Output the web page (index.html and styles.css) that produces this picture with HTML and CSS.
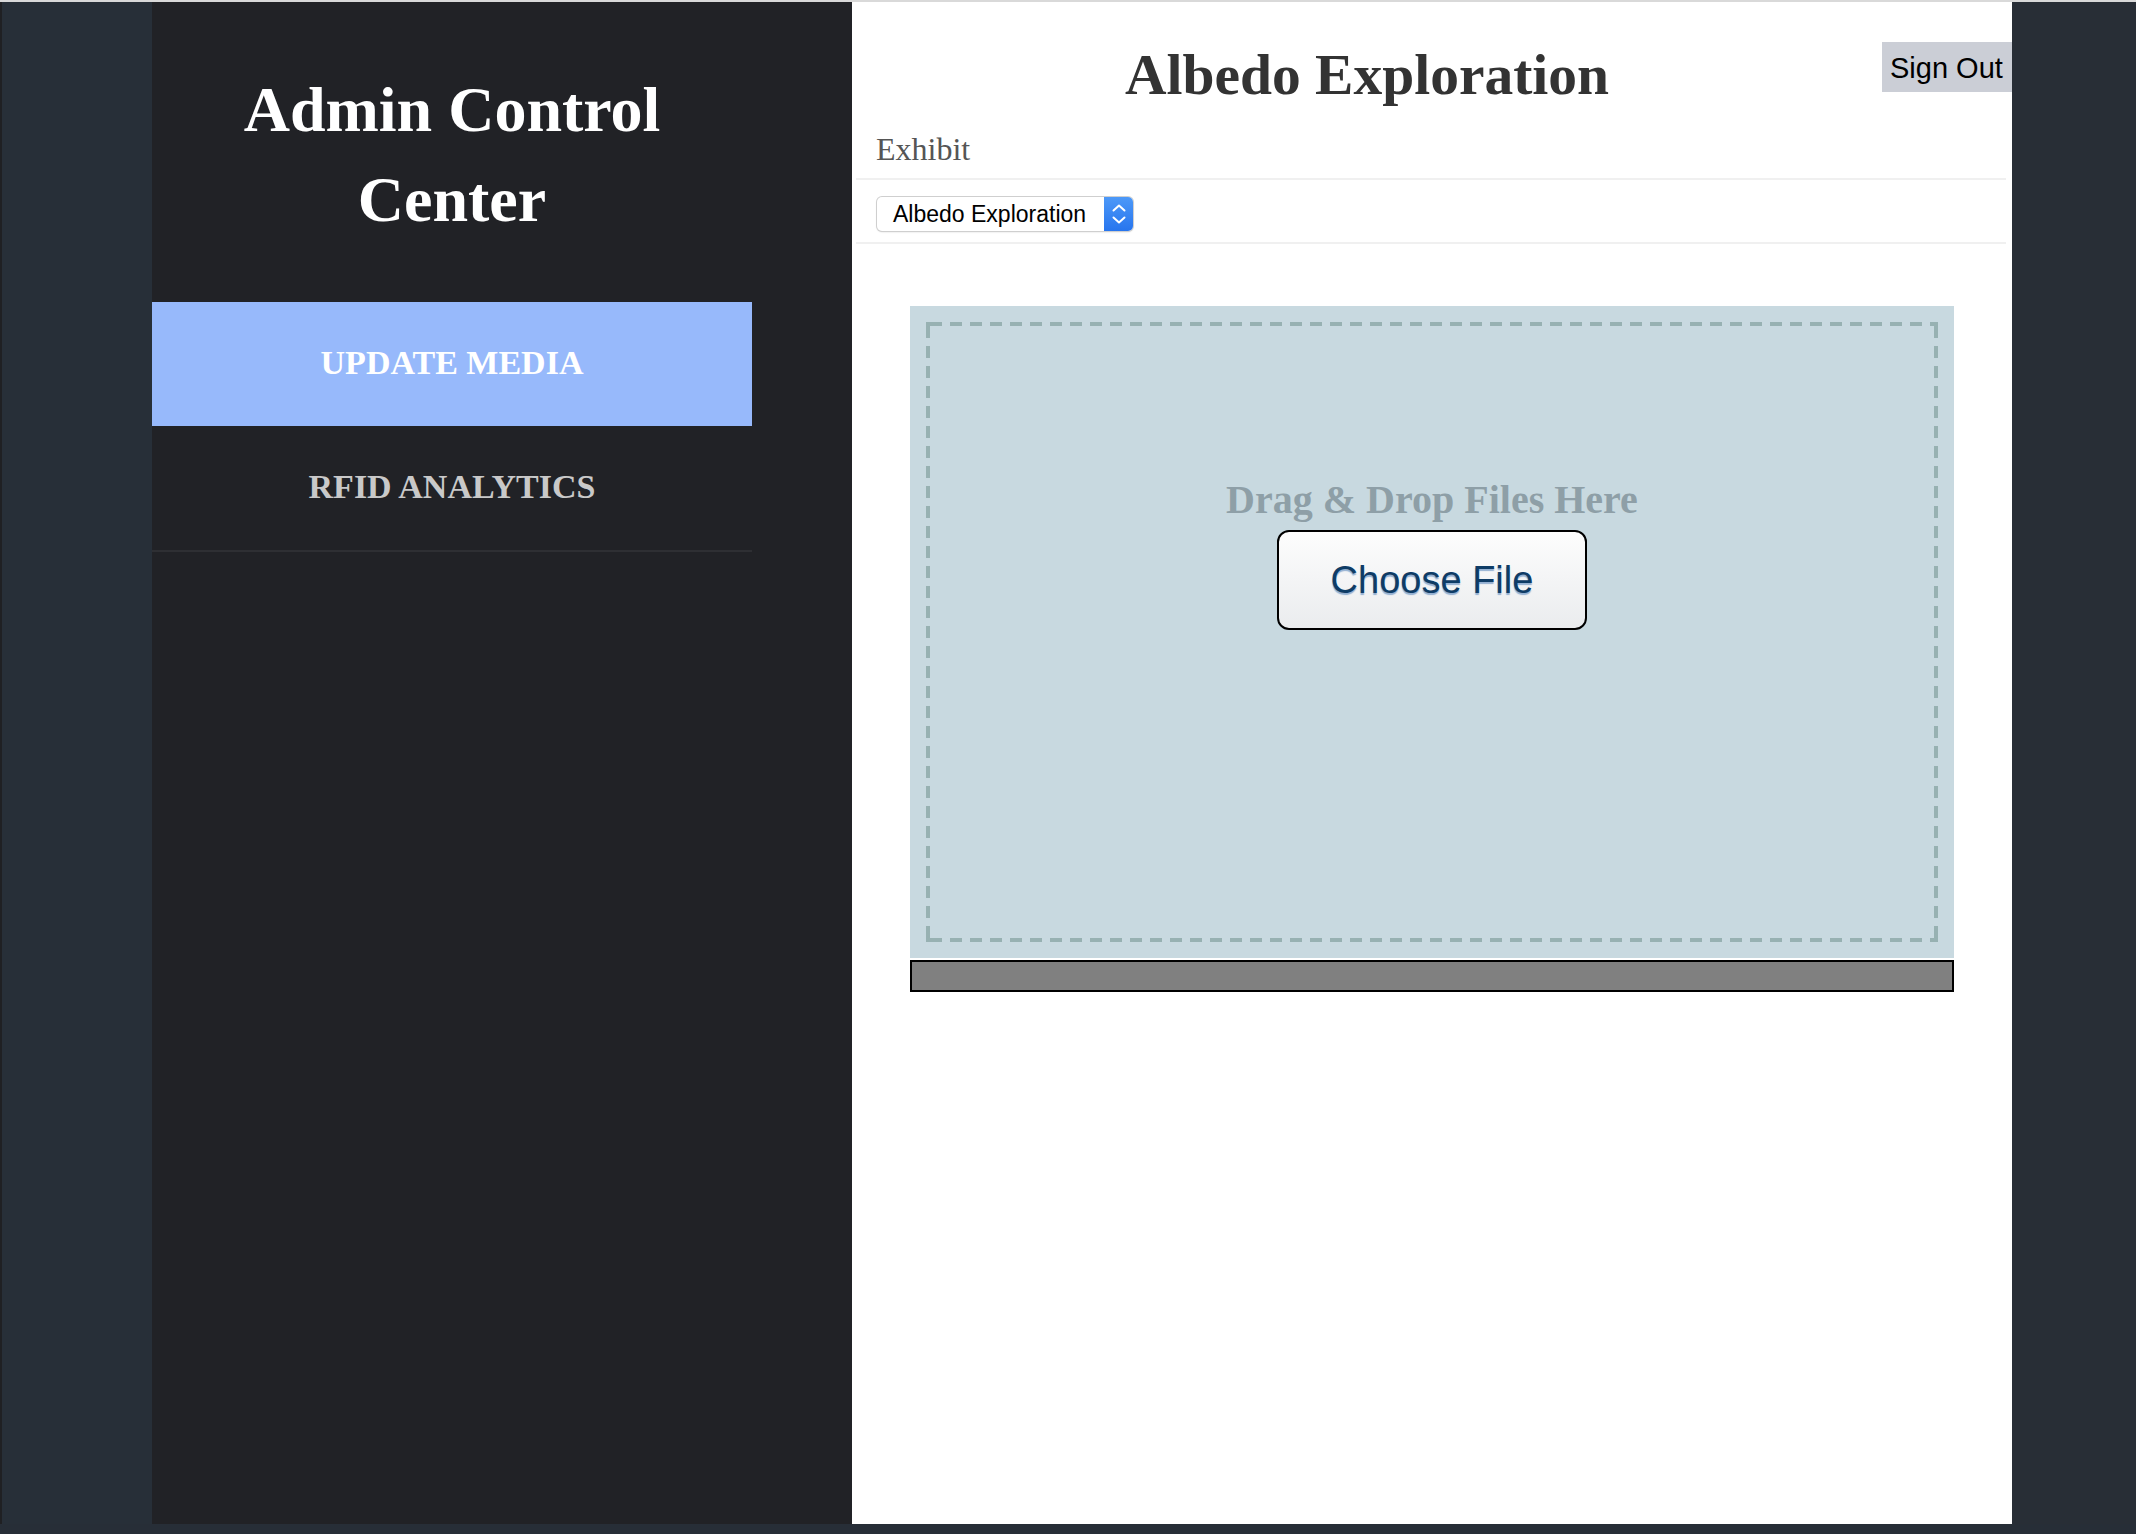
FILE: index.html
```html
<!DOCTYPE html>
<html lang="en">
<head>
<meta charset="utf-8">
<title>Admin Control Center</title>
<link rel="stylesheet" href="styles.css">
</head>
<body>
<div class="app">
  <div class="edge"></div>
  <div class="gutter"></div>
  <aside class="sidebar">
    <h1 class="brand">Admin Control<br>Center</h1>
    <nav class="nav">
      <a class="nav-item active">Update Media</a>
      <a class="nav-item">RFID Analytics</a>
    </nav>
  </aside>
  <main class="main">
    <header class="top">
      <h1 class="page-title">Albedo Exploration</h1>
      <button class="signout">Sign Out</button>
    </header>
    <div class="label">Exhibit</div>
    <div class="select-row">
      <div class="select">
        <span class="select-text">Albedo Exploration</span>
        <span class="stepper">
          <svg width="29" height="34" viewBox="0 0 29 34">
            <path d="M9.5 13.5 L15 8.5 L20.5 13.5" fill="none" stroke="#fff" stroke-width="2" stroke-linecap="round" stroke-linejoin="round"/>
            <path d="M9.5 20.5 L15 25.5 L20.5 20.5" fill="none" stroke="#fff" stroke-width="2" stroke-linecap="round" stroke-linejoin="round"/>
          </svg>
        </span>
      </div>
    </div>
    <section class="dropzone">
      <div class="dropzone-inner">
        <div class="drop-text">Drag &amp; Drop Files Here</div>
        <button class="choose">Choose File</button>
      </div>
    </section>
    <div class="progress"></div>
  </main>
  <div class="rightcol"></div>
</div>
</body>
</html>
```
FILE: styles.css
```css
html, body {
  margin: 0;
  padding: 0;
}
body {
  background: #272e37;
  width: 2136px;
  height: 1534px;
  overflow: hidden;
  border-top: 2px solid #d9d9d9;
  box-sizing: border-box;
}
.app {
  display: flex;
  height: 1522px;
}
.edge {
  width: 2px;
  background: #1f2023;
}
.gutter {
  width: 150px;
  background: #272f38;
}
.sidebar {
  width: 700px;
  background: #212226;
  box-sizing: border-box;
  padding-top: 63px;
}
.brand {
  width: 600px;
  margin: 0;
  text-align: center;
  font-family: "Liberation Serif", "Times New Roman", serif;
  font-weight: bold;
  font-size: 64px;
  line-height: 90px;
  color: #ffffff;
}
.nav {
  width: 600px;
  margin-top: 57px;
  border-bottom: 2px solid #2e2f33;
  display: flex;
  flex-direction: column;
}
.nav-item {
  height: 124px;
  display: flex;
  align-items: center;
  justify-content: center;
  font-family: "Liberation Serif", "Times New Roman", serif;
  font-weight: bold;
  font-size: 34px;
  text-transform: uppercase;
  color: #c9c9c9;
  padding-bottom: 2px;
  box-sizing: border-box;
}
.nav-item.active {
  background: #97b9fb;
  color: #ffffff;
}
.main {
  width: 1160px;
  background: #ffffff;
  display: flex;
  flex-direction: column;
}
.rightcol {
  flex: 1;
  background: #282e36;
}
.top {
  display: flex;
  align-items: flex-start;
  padding-top: 40px;
}
.page-title {
  flex: 1;
  margin: 0;
  text-align: center;
  font-family: "Liberation Serif", "Times New Roman", serif;
  font-weight: bold;
  font-size: 57.5px;
  line-height: 66px;
  color: #333333;
}
.signout {
  box-sizing: border-box;
  width: 130px;
  height: 50px;
  margin: 0;
  border: none;
  background: #cbced6;
  color: #000;
  font-family: "Liberation Sans", Arial, sans-serif;
  font-size: 29px;
  text-align: left;
  padding: 3px 0 0 8px;
  white-space: nowrap;
  overflow: hidden;
  line-height: 47px;
}
.label {
  margin-top: 20px;
  padding-left: 24px;
  font-family: "Liberation Serif", "Times New Roman", serif;
  font-size: 32px;
  line-height: 42px;
  color: #555555;
}
.select-row {
  margin: 8px 6px 0 4px;
  border-top: 2px solid #f0f0f0;
  border-bottom: 2px solid #f0f0f0;
  padding: 17px 0 11px 21px;
}
.select {
  width: 256px;
  height: 34px;
  border-radius: 5px;
  background: #ffffff;
  box-shadow: 0 0 0 1px #cfcfcf, 0 1px 2px rgba(0, 0, 0, 0.18);
  display: flex;
  overflow: hidden;
}
.select-text {
  flex: 1;
  padding-left: 16px;
  font-family: "Liberation Sans", Arial, sans-serif;
  font-size: 23px;
  line-height: 34px;
  color: #000;
  white-space: nowrap;
}
.stepper {
  width: 29px;
  height: 34px;
  background: linear-gradient(#4d99f8, #2775ee);
  display: block;
}
.stepper svg {
  display: block;
}
.dropzone {
  width: 90%;
  height: 652px;
  margin: 62px auto 0;
  padding: 16px;
  box-sizing: border-box;
  background: #c8d9e0;
}
.dropzone-inner {
  height: 100%;
  box-sizing: border-box;
  padding-top: 154px;
  display: flex;
  flex-direction: column;
  align-items: center;
  background:
    repeating-linear-gradient(90deg, #97b1b2 0 12px, transparent 12px 20px) 4px 0 / calc(100% - 8px) 4px no-repeat,
    repeating-linear-gradient(90deg, #97b1b2 0 12px, transparent 12px 20px) 4px 100% / calc(100% - 8px) 4px no-repeat,
    repeating-linear-gradient(180deg, #97b1b2 0 12px, transparent 12px 20px) 0 4px / 4px calc(100% - 8px) no-repeat,
    repeating-linear-gradient(180deg, #97b1b2 0 12px, transparent 12px 20px) 100% 4px / 4px calc(100% - 8px) no-repeat,
    linear-gradient(#97b1b2, #97b1b2) 0 0 / 4px 4px no-repeat,
    linear-gradient(#97b1b2, #97b1b2) 100% 0 / 4px 4px no-repeat,
    linear-gradient(#97b1b2, #97b1b2) 0 100% / 4px 4px no-repeat,
    linear-gradient(#97b1b2, #97b1b2) 100% 100% / 4px 4px no-repeat;
}
.drop-text {
  font-family: "Liberation Serif", "Times New Roman", serif;
  font-weight: bold;
  font-size: 40px;
  line-height: 48px;
  color: #8e9fa7;
}
.choose {
  margin-top: 6px;
  width: 310px;
  height: 100px;
  border: 2px solid #000;
  border-radius: 12px;
  background: linear-gradient(#fdfdfd, #eaecee);
  font-family: "Liberation Sans", Arial, sans-serif;
  font-size: 38px;
  color: #0e3c66;
  text-shadow: 0 2px 1px rgba(70, 120, 180, 0.55);
  padding: 0;
}
.progress {
  width: 90%;
  height: 32px;
  margin: 2px auto 0;
  box-sizing: border-box;
  border: 2px solid #000;
  background: #808080;
}
```
